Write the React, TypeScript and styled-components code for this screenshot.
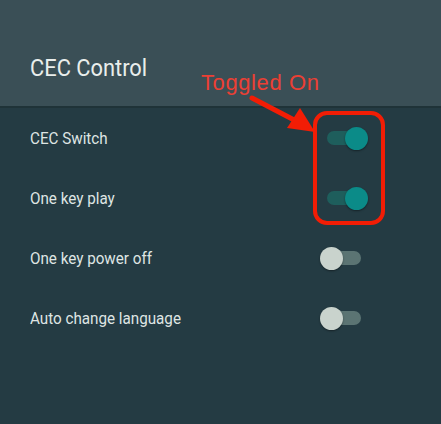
import React from "react";
import styled, { createGlobalStyle } from "styled-components";

const Global = createGlobalStyle`
  html, body { margin: 0; padding: 0; background: #243b43; }
  body { font-family: Roboto, "Noto Sans", sans-serif; }
`;

const Page = styled.div`
  position: relative;
  width: 441px;
  height: 424px;
  background: #243b43;
  overflow: hidden;
`;

const Header = styled.header`
  background: #3a4f56;
  border-bottom: 2px solid #1f3338;
  display: flex;
  align-items: flex-end;
  padding: 0 0 24px 30px;
  box-sizing: content-box;
  height: 82px;
`;

const Title = styled.h1`
  margin: 0;
  font-family: Roboto, sans-serif;
  font-weight: 400;
  font-size: 24px;
  line-height: 28px;
  color: #e9eeec;
  transform: scaleX(0.91);
  transform-origin: left center;
`;

const List = styled.div`
  display: flex;
  flex-direction: column;
`;

const Row = styled.div`
  height: 60px;
  display: flex;
  align-items: center;
  justify-content: space-between;
  padding: 0 73px 0 30px;
`;

const Label = styled.span`
  font-family: Roboto, sans-serif;
  font-size: 16px;
  color: #dfe5e3;
  transform: scaleX(0.95);
  transform-origin: left center;
`;

const SwitchBox = styled.div`
  position: relative;
  width: 48px;
  height: 24px;
  display: flex;
  align-items: center;
  justify-content: center;
`;

const Track = styled.div<{ $on: boolean }>`
  width: 34px;
  height: 14px;
  border-radius: 7px;
  background: ${(p) => (p.$on ? "#1e5e5c" : "#5b7473")};
`;

const Knob = styled.div<{ $on: boolean }>`
  position: absolute;
  top: 0.5px;
  ${(p) => (p.$on ? "right: 0;" : "left: 0;")}
  width: 23px;
  height: 23px;
  border-radius: 50%;
  background: ${(p) => (p.$on ? "#0b8b88" : "#c9d3cd")};
  box-shadow: 0 1px 2px rgba(0, 0, 0, 0.4);
`;

const Toggle = ({ on }: { on: boolean }) => (
  <SwitchBox>
    <Track $on={on} />
    <Knob $on={on} />
  </SwitchBox>
);

const Callout = styled.div`
  position: absolute;
  left: 313px;
  top: 111px;
  width: 64px;
  height: 106px;
  border: 4px solid #f21d05;
  border-radius: 14px;
`;

const Note = styled.span`
  position: absolute;
  left: 201px;
  top: 70px;
  font-family: "Liberation Sans", Arial, sans-serif;
  font-size: 22px;
  letter-spacing: 0.6px;
  line-height: 26px;
  color: #ec3f34;
`;

const Arrow = styled.svg`
  position: absolute;
  left: 240px;
  top: 90px;
`;

const rows = [
  { label: "CEC Switch", on: true },
  { label: "One key play", on: true },
  { label: "One key power off", on: false },
  { label: "Auto change language", on: false },
];

export default function App() {
  return (
    <Page>
      <Global />
      <Header>
        <Title>CEC Control</Title>
      </Header>
      <List>
        {rows.map((r) => (
          <Row key={r.label}>
            <Label>{r.label}</Label>
            <Toggle on={r.on} />
          </Row>
        ))}
      </List>
      <Note>Toggled On</Note>
      <Arrow width="90" height="50" viewBox="0 0 90 50">
        <line x1="12" y1="8" x2="58" y2="32" stroke="#f21d05" strokeWidth="5" strokeLinecap="round" />
        <polygon points="75,42 47,38 60,18" fill="#f21d05" />
      </Arrow>
      <Callout />
    </Page>
  );
}
